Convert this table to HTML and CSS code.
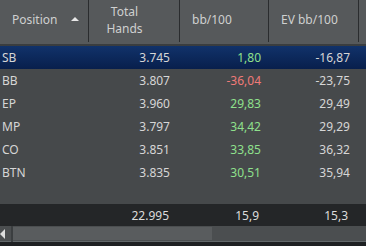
FILE: index.html
```html
<!DOCTYPE html>
<html>
<head>
<meta charset="utf-8">
<link rel="stylesheet" href="styles.css">
</head>
<body>
<div class="grid">
  <div class="head">
    <div class="hc first"><span>Position</span><span class="tri"></span></div>
    <div class="hc center">Total<br>Hands</div>
    <div class="hc">bb/100</div>
    <div class="hc">EV bb/100</div>
    <div class="hc last"></div>
  </div>
  <div class="rows">
    <div class="row sel"><span class="pos">SB</span><span class="num">3.745</span><span class="num g">1,80</span><span class="num">-16,87</span><span></span></div>
    <div class="row"><span class="pos">BB</span><span class="num">3.807</span><span class="num r">-36,04</span><span class="num">-23,75</span><span></span></div>
    <div class="row"><span class="pos">EP</span><span class="num">3.960</span><span class="num g">29,83</span><span class="num">29,49</span><span></span></div>
    <div class="row"><span class="pos">MP</span><span class="num">3.797</span><span class="num g">34,42</span><span class="num">29,29</span><span></span></div>
    <div class="row"><span class="pos">CO</span><span class="num">3.851</span><span class="num g">33,85</span><span class="num">36,32</span><span></span></div>
    <div class="row"><span class="pos">BTN</span><span class="num">3.835</span><span class="num g">30,51</span><span class="num">35,94</span><span></span></div>
  </div>
  <div class="total"><span></span><span class="num">22.995</span><span class="num t">15,9</span><span class="num t">15,3</span><span></span></div>
  <div class="scroll"><div class="arrow"></div><div class="thumb"></div></div>
</div>
</body>
</html>
```
FILE: styles.css
```css
html, body { margin: 0; padding: 0; }
body {
  width: 366px; height: 246px; overflow: hidden;
  background: #46494b;
  font-family: "Noto Sans", "Open Sans", sans-serif;
  font-size: 12px;
  color: #d6d6d6;
}
.grid { display: flex; flex-direction: column; height: 246px; }
.head, .row, .total {
  display: grid;
  grid-template-columns: 89px 91px 89px 90px 7px;
}
.head {
  height: 44px;
  background: #56595b;
  border-bottom: 2px solid #3a3d3f;
  color: #cfd0d0;
}
.hc {
  display: flex; align-items: center;
  padding-left: 12px;
  padding-bottom: 4px;
  border-right: 1px solid #2a2c2e;
  margin-bottom: 2px;
}
.hc.first { padding-left: 12px; justify-content: space-between; padding-right: 8px; }
.hc.center { justify-content: center; text-align: center; padding-left: 0; line-height: 17px; padding-right: 19px; padding-bottom: 2px; }
.hc.last { border-right: none; }
.tri {
  width: 0; height: 0;
  border-left: 4px solid transparent;
  border-right: 4px solid transparent;
  border-bottom: 4px solid #e8e8e8;
  margin-right: 1px;
}
.rows { flex: 1; }
.row { height: 23px; align-items: center; }
.row.sel { background: linear-gradient(#11326a, #081f4c); }
.pos { padding-left: 2px; }
.num { text-align: right; padding-right: 10px; }
.row .num:nth-child(3) { padding-right: 8px; }
.row .num:nth-child(4) { padding-right: 9px; }
.g { color: #8fe08c; }
.r { color: #f07a78; }
.total {
  height: 22px; align-items: center;
  background: #242628;
  color: #dcdcdc;
}
.total .num { padding-right: 11px; }
.total .t:nth-child(3) { padding-right: 10px; }
.scroll {
  height: 16px;
  background: #4b4e50;
  border-bottom: 4px solid #1e2022;
  display: flex;
  box-shadow: inset 0 -1px 0 #62686a;
}
.arrow {
  width: 11px; border-right: 2px solid #3b3e40;
  position: relative;
}
.arrow::before {
  content: ""; position: absolute; left: 0; top: 3px;
  border-top: 5px solid transparent;
  border-bottom: 5px solid transparent;
  border-right: 5px solid #dddddd;
}
.thumb { width: 199px; background: #595c5e; margin: 1px 0 2px 0; }
```
